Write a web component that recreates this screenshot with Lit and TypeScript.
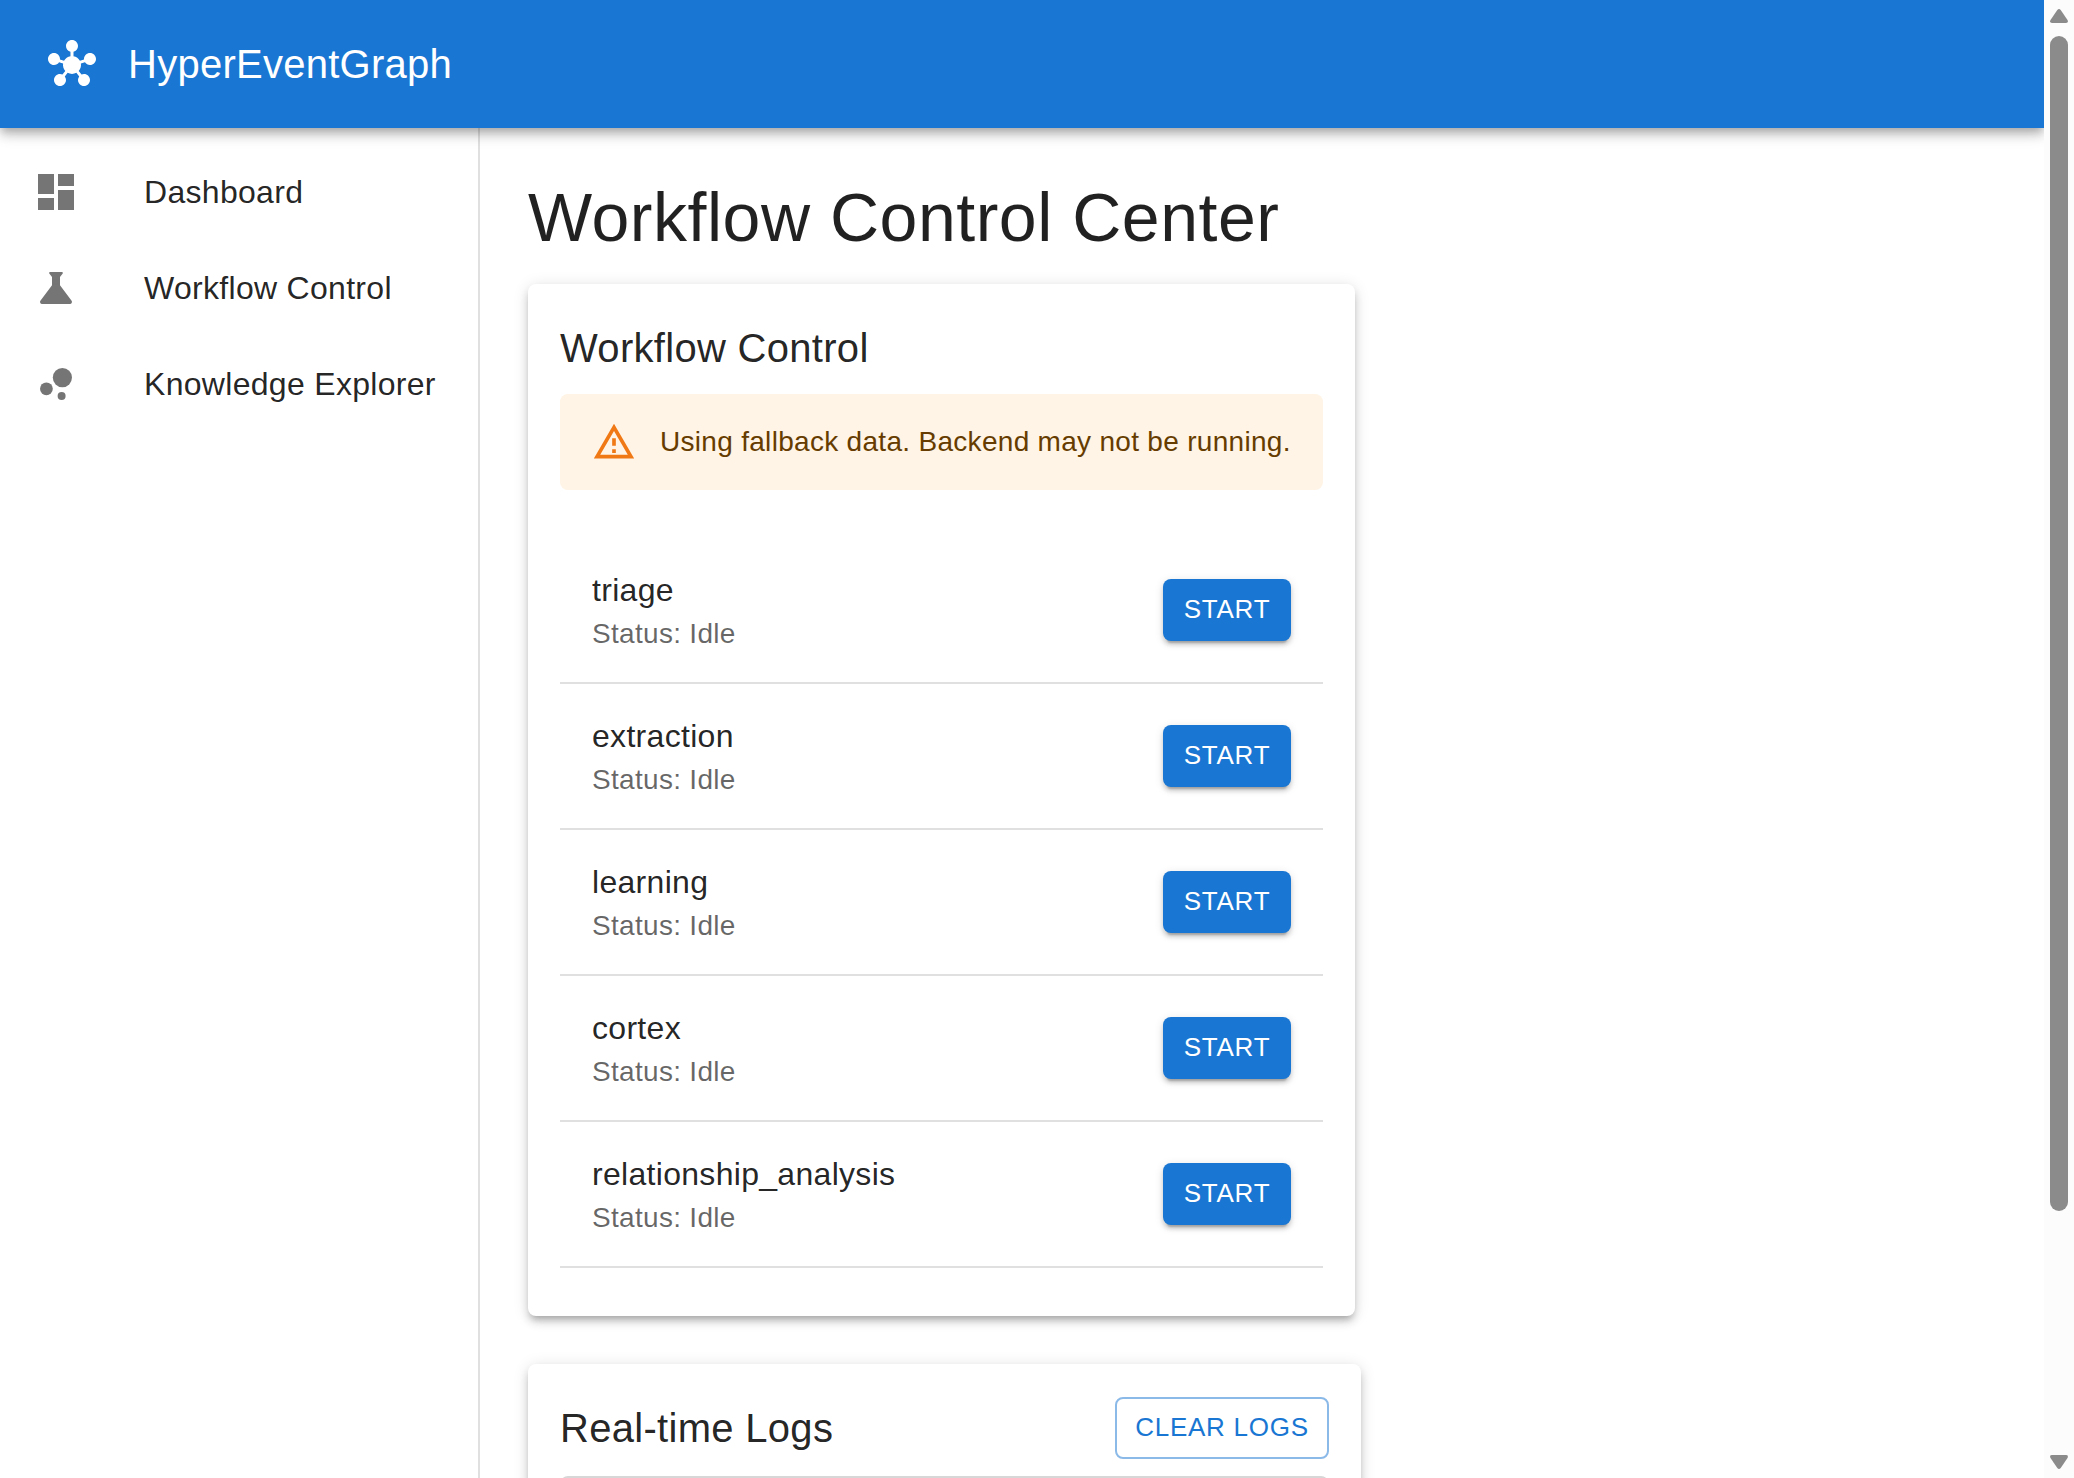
import { LitElement, html, css, svg } from "lit";
import { customElement, state } from "lit/decorators.js";

const HUB = "M8.4 18.2c.38.5.6 1.12.6 1.8 0 1.66-1.34 3-3 3s-3-1.34-3-3 1.34-3 3-3c.44 0 .85.09 1.23.26l1.41-1.77c-.92-1.03-1.29-2.39-1.09-3.69l-2.03-.68c-.54.83-1.46 1.38-2.52 1.38-1.66 0-3-1.34-3-3s1.34-3 3-3 3 1.34 3 3c0 .07 0 .14-.01.21l2.03.68c.64-1.21 1.82-2.09 3.22-2.32V5.91C9.96 5.57 9 4.4 9 3c0-1.66 1.34-3 3-3s3 1.34 3 3c0 1.4-.96 2.57-2.25 2.91v2.16c1.4.23 2.58 1.11 3.22 2.32L18 9.71V9.5c0-1.66 1.34-3 3-3s3 1.34 3 3-1.34 3-3 3c-1.06 0-1.98-.55-2.52-1.37l-2.03.68c.2 1.29-.16 2.65-1.09 3.69l1.41 1.77c.38-.18.79-.27 1.23-.27 1.66 0 3 1.34 3 3s-1.34 3-3 3-3-1.34-3-3c0-.68.22-1.3.6-1.8l-1.41-1.77c-1.35.75-3.01.76-4.37 0L8.4 18.2z";
const WARNING = "M12 5.99L19.53 19H4.47L12 5.99M12 2L1 21h22L12 2zm1 14h-2v2h2v-2zm0-6h-2v4h2v-4z";

const NAV = [
  { label: "Dashboard", shape: svg`<path d="M3 13h8V3H3v10zm0 8h8v-6H3v6zm10 0h8V11h-8v10zm0-18v6h8V3h-8z"/>` },
  { label: "Workflow Control", shape: svg`<path d="M19.8 18.4 14 10.67V6.5l1.35-1.69c.26-.33.03-.81-.39-.81H9.04c-.42 0-.65.48-.39.81L10 6.5v4.17L4.2 18.4c-.49.66-.02 1.6.8 1.6h14c.82 0 1.29-.94.8-1.6z"/>` },
  { label: "Knowledge Explorer", shape: svg`<circle cx="7.2" cy="14.4" r="3.2"/><circle cx="14.8" cy="18" r="2"/><circle cx="15.2" cy="8.8" r="4.8"/>` },
];

@customElement("app-root")
export class AppRoot extends LitElement {
  @state() private workflows = ["triage", "extraction", "learning", "cortex", "relationship_analysis"].map(
    (name) => ({ name, status: "Idle" })
  );

  static styles = css`
    :host {
      display: flex;
      height: 1478px;
      overflow: hidden;
      background: #fff;
      color: rgba(0, 0, 0, 0.87);
      font-family: "Liberation Sans", Arial, sans-serif;
      font-size: 32px;
      line-height: 1.5;
      letter-spacing: 0.00938em;
    }
    * { box-sizing: border-box; }
    svg { fill: currentColor; flex: none; display: block; }
    .page { flex: 1; min-width: 0; display: flex; flex-direction: column; overflow: hidden; }
    .bar {
      flex: none;
      height: 128px;
      padding: 0 48px;
      display: flex;
      align-items: center;
      gap: 32px;
      background: #1976d2;
      color: #fff;
      z-index: 2;
      box-shadow: 0 4px 8px -2px rgba(0, 0, 0, 0.2), 0 8px 10px 0 rgba(0, 0, 0, 0.14), 0 2px 20px 0 rgba(0, 0, 0, 0.12);
    }
    .title { font-size: 40px; line-height: 64px; letter-spacing: 0.0065em; }
    .body { flex: 1; min-height: 0; display: flex; }
    .nav { flex: none; width: 480px; padding-top: 16px; border-right: 2px solid rgba(0, 0, 0, 0.12); }
    .link { display: flex; align-items: center; height: 96px; padding: 0 32px; gap: 64px; }
    .link svg { color: rgba(0, 0, 0, 0.54); }
    .main { flex: 1; min-width: 0; padding: 48px; display: flex; flex-direction: column; align-items: flex-start; }
    h1, h2, p { margin: 0; font-weight: 400; }
    h1 { font-size: 68px; line-height: 82px; letter-spacing: 0.0077em; margin-bottom: 26px; }
    h2 { font-size: 40px; line-height: 64px; letter-spacing: 0.0075em; }
    .card {
      flex: none;
      padding: 32px;
      border-radius: 8px;
      background: #fff;
      box-shadow: 0 6px 6px -4px rgba(0, 0, 0, 0.2), 0 6px 8px 0 rgba(0, 0, 0, 0.14), 0 2px 16px 0 rgba(0, 0, 0, 0.12);
    }
    .control { width: 827px; height: 1032px; margin-bottom: 48px; }
    .logs { width: 833px; }
    .alert {
      display: flex;
      align-items: center;
      gap: 24px;
      height: 96px;
      margin: 14px 0 48px;
      padding: 0 32px;
      border-radius: 8px;
      background: #fff4e5;
      color: #663c00;
      font-size: 28px;
      line-height: 40px;
      letter-spacing: 0.01071em;
      white-space: nowrap;
    }
    .alert svg { color: #ef6c00; opacity: 0.9; }
    .row {
      display: flex;
      align-items: center;
      justify-content: space-between;
      height: 146px;
      padding: 0 32px;
      border-bottom: 2px solid rgba(0, 0, 0, 0.12);
    }
    .status { font-size: 28px; line-height: 40px; letter-spacing: 0.01071em; color: rgba(0, 0, 0, 0.6); }
    button {
      font: inherit;
      font-size: 26px;
      line-height: 46px;
      letter-spacing: 0.02857em;
      min-width: 128px;
      height: 62px;
      padding: 0 20px 2px;
      border: 0;
      border-radius: 8px;
      text-transform: uppercase;
      white-space: nowrap;
    }
    .start {
      background: #1976d2;
      color: #fff;
      box-shadow: 0 6px 2px -4px rgba(0, 0, 0, 0.2), 0 4px 4px 0 rgba(0, 0, 0, 0.14), 0 2px 10px 0 rgba(0, 0, 0, 0.12);
    }
    .clear { width: 214px; padding: 0 0 2px; background: transparent; color: #1976d2; border: 2px solid rgba(25, 118, 210, 0.5); }
    .head { display: flex; align-items: center; justify-content: space-between; height: 64px; margin-bottom: 16px; }
    .output { height: 600px; border: 2px solid #d7d7d7; border-radius: 8px; background: #f5f5f5; }
    .scroll {
      flex: none;
      width: 30px;
      padding: 9px 6px;
      display: flex;
      flex-direction: column;
      align-items: center;
      background: #fcfcfc;
      color: #8b8b8b;
    }
    .thumb { width: 18px; height: 1175px; margin: 13px 0 auto; border-radius: 9px; background: #8b8b8b; }
  `;

  render() {
    return html`
      <div class="page">
        <header class="bar">
          <svg width="48" height="48" viewBox="0 0 24 24"><path d=${HUB}></path></svg>
          <div class="title">HyperEventGraph</div>
        </header>
        <div class="body">
          <nav class="nav">
            ${NAV.map(
              (item) => html`<div class="link">
                <svg width="48" height="48" viewBox="0 0 24 24">${item.shape}</svg><span>${item.label}</span>
              </div>`
            )}
          </nav>
          <main class="main">
            <h1>Workflow Control Center</h1>
            <section class="card control">
              <h2>Workflow Control</h2>
              <div class="alert">
                <svg width="44" height="44" viewBox="0 0 24 24"><path d=${WARNING}></path></svg>
                <span>Using fallback data. Backend may not be running.</span>
              </div>
              ${this.workflows.map(
                (w) => html`<div class="row">
                  <div>
                    <p>${w.name}</p>
                    <p class="status">Status: ${w.status}</p>
                  </div>
                  <button class="start">Start</button>
                </div>`
              )}
            </section>
            <section class="card logs">
              <div class="head">
                <h2>Real-time Logs</h2>
                <button class="clear">Clear Logs</button>
              </div>
              <div class="output"></div>
            </section>
          </main>
        </div>
      </div>
      <div class="scroll">
        <svg width="18" height="14" viewBox="0 0 18 14"><path d="M7.3 1Q9-1 10.7 1L17.5 11Q18.8 14 16 14H2Q-.8 14 .5 11Z"></path></svg>
        <div class="thumb"></div>
        <svg width="18" height="14" viewBox="0 0 18 14"><path d="M7.3 13Q9 15 10.7 13L17.5 3Q18.8 0 16 0H2Q-.8 0 .5 3Z"></path></svg>
      </div>
    `;
  }
}
